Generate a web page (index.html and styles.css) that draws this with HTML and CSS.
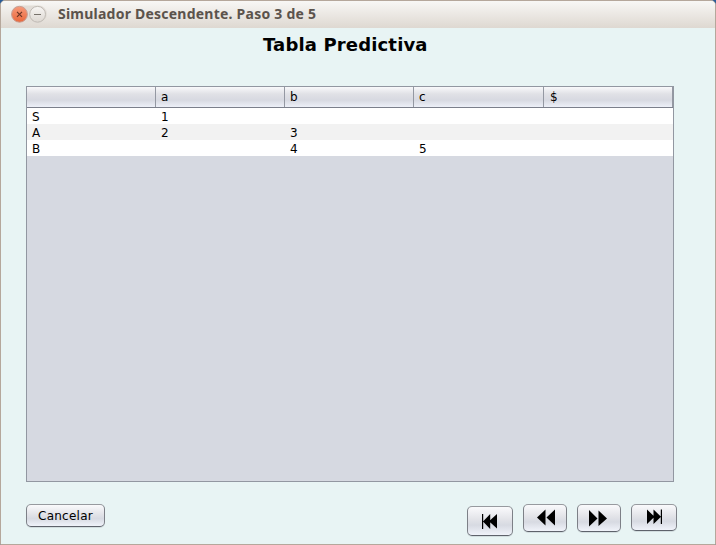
FILE: index.html
```html
<!DOCTYPE html>
<html lang="es">
<head>
<meta charset="utf-8">
<title>Simulador Descendente. Paso 3 de 5</title>
<link rel="stylesheet" href="styles.css">
</head>
<body>
<div class="window">
  <header class="titlebar">
    <div class="controls">
      <svg width="36" height="20" viewBox="0 0 36 20">
        <defs>
          <linearGradient id="close" x1="0" y1="0" x2="0" y2="1"><stop offset="0" stop-color="#f79a7a"/><stop offset="1" stop-color="#e9673b"/></linearGradient>
          <linearGradient id="min" x1="0" y1="0" x2="0" y2="1"><stop offset="0" stop-color="#f8f6f4"/><stop offset="1" stop-color="#dcd7d1"/></linearGradient>
        </defs>
        <rect x="0" y="1.5" width="36" height="17" rx="8.5" fill="#e2ddd7"/>
        <circle cx="8.5" cy="10.3" r="7.9" fill="url(#close)" stroke="#c79c90"/>
        <path d="M6 7.800l5 5m0-5l-5 5" stroke="#6b3525" stroke-width="1.200"/>
        <circle cx="26.600" cy="10.300" r="7.900" fill="url(#min)" stroke="#bfbab4"/>
        <path d="M23 10.500h7" stroke="#77726b"/>
      </svg>
    </div>
    <span class="caption">Simulador Descendente. Paso 3 de 5</span>
  </header>
  <main class="content">
    <h1 class="heading"><span>Tabla Predictiva</span></h1>
    <div class="table-pane">
      <div class="row head"><span></span><span>a</span><span>b</span><span>c</span><span>$</span></div>
      <div class="row"><span>S</span><span>1</span><span></span><span></span><span></span></div>
      <div class="row alt"><span>A</span><span>2</span><span>3</span><span></span><span></span></div>
      <div class="row"><span>B</span><span></span><span>4</span><span>5</span><span></span></div>
    </div>
    <div class="actions">
      <button class="btn cancel">Cancelar</button>
      <div class="nav">
        <button class="btn first" aria-label="Primero"><svg width="46" height="30"><path d="M15 8h1.200v15H15zM23.200 8v15L16 15.500zM30 8v14.500L22 15.300z"/></svg></button>
        <button class="btn prev" aria-label="Anterior"><svg width="44" height="28"><path d="M22.500 5.500v16L14 13.500zM32 5.500v16l-8.500-8z"/></svg></button>
        <button class="btn next" aria-label="Siguiente"><svg width="44" height="28"><path d="M12 6v16.500l8.500-8zM21.500 6.500v15.500l8.500-7.500z"/></svg></button>
        <button class="btn last" aria-label="Último"><svg width="46" height="27"><path d="M16 5.500V20l7.500-7.200zM22.500 5.500V20l7.500-7.200zM29.800 5.500H31V20h-1.200z"/></svg></button>
      </div>
    </div>
  </main>
</div>
</body>
</html>
```
FILE: styles.css
```css
* { box-sizing: border-box; }
body { margin: 0; background: #2a5b96; overflow: hidden; }
.window {
  width: 716px;
  height: 545px;
  border: 1px solid #b5a79b;
  border-radius: 5px 5px 0 0;
  background: #e8f4f4;
  overflow: hidden;
  font: 12px "DejaVu Sans", sans-serif;
  color: #000;
}
.titlebar {
  height: 27px;
  display: flex;
  align-items: flex-start;
  padding: 3px 0 0 10px;
  background: linear-gradient(#f8f7f5, #ded8d1);
}
.controls { width: 47px; height: 20px; }
.controls svg { display: block; }
.caption {
  font: bold 14px/20px "Noto Sans", sans-serif;
  letter-spacing: 0.230px;
  color: #5b534c;
  white-space: nowrap;
}
.content { padding: 0 0 0 25px; }
.heading {
  margin: 0;
  height: 58px;
  padding: 5px 0 0 237px;
  font-size: 18px;
  line-height: 24px;
  letter-spacing: 0.150px;
  white-space: nowrap;
}
.table-pane {
  width: 648px;
  height: 396px;
  border: 1px solid #9297a1;
  background: #d6d9e1;
}
.row {
  display: grid;
  grid-template-columns: 129px 129px 129px 130px 129px;
  height: 16px;
  line-height: 19px;
  background: #fff;
}
.row span { padding-left: 5px; height: 16px; }
.alt { background: #f2f2f2; }
.head {
  height: 21px;
  line-height: 20px;
  border-bottom: 1px solid #7b7f8b;
  background: linear-gradient(#f9f9fb 0, #e0e1e6 35%, #d7d9e1 65%, #edf0f8 100%);
}
.head span { height: 20px; border-right: 1px solid #9498a2; }
.head span:last-child { padding-left: 6px; }
.actions {
  display: flex;
  align-items: flex-start;
  padding-top: 22px;
}
.btn {
  display: block;
  padding: 0;
  border: 1px solid #7d8087;
  border-top-color: #979a9f;
  border-bottom-color: #5e626b;
  border-radius: 5px;
  background: linear-gradient(#fafafc 0, #e2e3e8 45%, #d7dae2 65%, #f0f3fa 100%);
  box-shadow: 0 1px 0 #d2dddf;
  font: 12px "DejaVu Sans", sans-serif;
  color: #000;
}
.btn svg { display: block; margin: -1px; }
.cancel { width: 79px; height: 23px; letter-spacing: 0.250px; }
.nav { display: flex; align-items: flex-start; gap: 10px; margin-left: 362px; }
.first { width: 46px; height: 30px; margin-top: 2px; }
.prev, .next { width: 44px; height: 28px; }
.last { width: 46px; height: 27px; }
```
